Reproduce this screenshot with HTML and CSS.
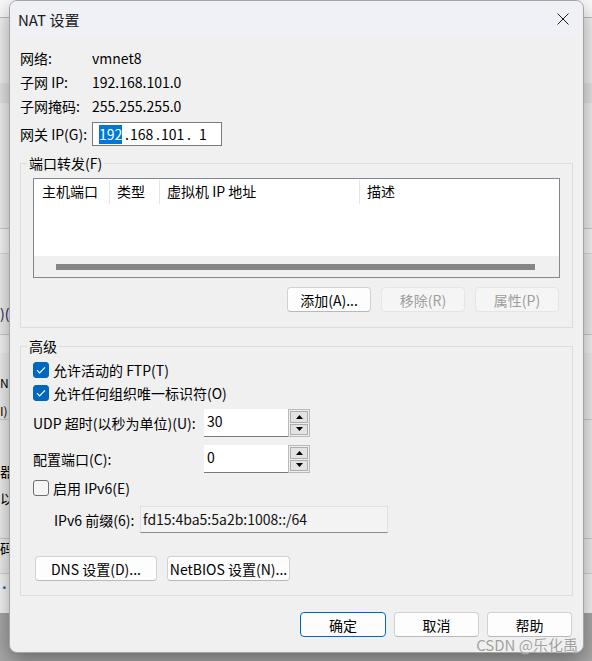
FILE: index.html
```html
<!DOCTYPE html>
<html lang="zh-CN">
<head>
<meta charset="utf-8">
<title>NAT 设置</title>
<link rel="stylesheet" href="styles.css">
</head>
<body>
<div class="desktop">
  <div class="bgwin">
    <div class="bg-r r1"></div>
    <div class="bg-r r2"></div>
    <div class="bg-r r3"></div>
    <div class="bg-r r4"></div>
    <div class="bg-r r5"></div>
    <div class="bg-r r6"><span class="frag f6">)(</span></div>
    <div class="bg-r r7"></div>
    <div class="bg-r r8"><span class="frag f8a">N)</span><span class="frag f8b">I)</span></div>
    <div class="bg-r r9"><span class="frag f9a">器</span><span class="frag f9b">以</span></div>
    <div class="bg-r r10"><span class="frag f10">码</span></div>
    <div class="bg-r r11"><span class="frag f11">.</span></div>
  </div>

  <div class="dialog">
    <div class="titlebar">
      <span class="title">NAT 设置</span>
      <svg class="close" width="12" height="12" viewBox="0 0 12 12"><path d="M0.5 0.5 L11.5 11.5 M11.5 0.5 L0.5 11.5" stroke="#1a1a1a" stroke-width="1" fill="none"/></svg>
    </div>

    <div class="content">
      <div class="info">
        <div class="row"><span class="k">网络:</span><span>vmnet8</span></div>
        <div class="row"><span class="k">子网 IP:</span><span>192.168.101.0</span></div>
        <div class="row"><span class="k">子网掩码:</span><span>255.255.255.0</span></div>
        <div class="row gw"><span class="k">网关 IP(G):</span>
          <div class="ipbox">
            <span class="oct"><span class="sel">192</span></span><span class="dot">.</span><span class="oct">168</span><span class="dot">.</span><span class="oct">101</span><span class="dot">.</span><span class="oct">1</span>
          </div>
        </div>
      </div>

      <fieldset class="group pf">
        <legend>端口转发(F)</legend>
        <div class="list">
          <div class="lhead">
            <span class="col c1">主机端口</span>
            <span class="col c2">类型</span>
            <span class="col c3">虚拟机 IP 地址</span>
            <span class="col c4">描述</span>
          </div>
          <div class="hscroll"><div class="thumb"></div></div>
        </div>
        <div class="btnrow">
          <div class="btn w84">添加(A)...</div>
          <div class="btn w84 disabled">移除(R)</div>
          <div class="btn w84 disabled">属性(P)</div>
        </div>
      </fieldset>

      <fieldset class="group adv">
        <legend>高级</legend>
        <div class="chk-row">
          <span class="cb on"><svg width="16" height="16" viewBox="0 0 16 16"><path d="M4 8.2 L6.6 10.8 L12 5.4" stroke="#fff" stroke-width="1.2" fill="none"/></svg></span>
          <span>允许活动的 FTP(T)</span>
        </div>
        <div class="chk-row">
          <span class="cb on"><svg width="16" height="16" viewBox="0 0 16 16"><path d="M4 8.2 L6.6 10.8 L12 5.4" stroke="#fff" stroke-width="1.2" fill="none"/></svg></span>
          <span>允许任何组织唯一标识符(O)</span>
        </div>
        <div class="spin-row first">
          <span>UDP 超时(以秒为单位)(U):</span>
          <div class="num">30</div>
          <div class="spin">
            <b><svg width="7" height="4" viewBox="0 0 7 4"><polygon points="3.5,0 7,4 0,4" fill="#000"/></svg></b>
            <b><svg width="7" height="4" viewBox="0 0 7 4"><polygon points="0,0 7,0 3.5,4" fill="#000"/></svg></b>
          </div>
        </div>
        <div class="spin-row second">
          <span>配置端口(C):</span>
          <div class="num">0</div>
          <div class="spin">
            <b><svg width="7" height="4" viewBox="0 0 7 4"><polygon points="3.5,0 7,4 0,4" fill="#000"/></svg></b>
            <b><svg width="7" height="4" viewBox="0 0 7 4"><polygon points="0,0 7,0 3.5,4" fill="#000"/></svg></b>
          </div>
        </div>
        <div class="chk-row third">
          <span class="cb"></span>
          <span>启用 IPv6(E)</span>
        </div>
        <div class="prefix-row">
          <span>IPv6 前缀(6):</span>
          <div class="ro">fd15:4ba5:5a2b:1008::/64</div>
        </div>
        <div class="dns-row">
          <div class="btn w122">DNS 设置(D)...</div>
          <div class="btn w123">NetBIOS 设置(N)...</div>
        </div>
      </fieldset>

      <div class="actions">
        <div class="btn w86 primary">确定</div>
        <div class="btn w85">取消</div>
        <div class="btn w85">帮助</div>
      </div>
    </div>
  </div>

  <div class="watermark">CSDN @乐化禹</div>
</div>
</body>
</html>
```

FILE: styles.css
```css
* { box-sizing: border-box; }

body {
  margin: 0;
  font-family: "Noto Sans CJK SC", "Noto Sans", sans-serif;
  font-size: 14px;
  color: #000;
}

.desktop {
  position: relative;
  width: 592px;
  height: 661px;
  overflow: hidden;
  background: #a9a9a9;
}

/* background window peeking out on the left */
.bgwin {
  position: absolute;
  left: 0;
  top: 0;
  width: 592px;
  height: 613px;
  background: #f0f0f0;
  display: flex;
  flex-direction: column;
}
.bg-r { position: relative; flex: none; overflow: hidden; }
.r1 { height: 18px; background: #fbfbfb; border-bottom: 1px solid #bdbdbd; }
.r2 { height: 65px; background: #f2f2f2; }
.r3 { height: 20px; background: #e6e6e6; }
.r4 { height: 126px; background: #f2f2f2; border-bottom: 1px solid #cfcfcf; }
.r5 { height: 25px; background: #f9f9f9; border-bottom: 1px solid #dedede; }
.r6 { height: 81px; background: #f0f0f0; border-bottom: 1px solid #cdcdcd; }
.r7 { height: 18px; background: #f7f7f7; }
.r8 { height: 67px; background: #f0f0f0; border-bottom: 1px solid #cdcdcd; }
.r9 { height: 119px; background: #f0f0f0; border-bottom: 1px solid #cdcdcd; }
.r10 { height: 35px; background: #f0f0f0; border-bottom: 1px solid #d6d6d6; }
.r11 { flex: 1; background: #f7f7f7; }

.frag {
  position: absolute;
  left: 0;
  font-size: 14px;
  line-height: 16px;
  white-space: nowrap;
}
.f6 { top: 51px; color: #1a1a60; }
.f8a { top: 22px; font-size: 12px; }
.f8b { top: 50px; font-size: 12px; }
.f9a { top: 43px; }
.f9b { top: 70px; }
.f10 { top: 1px; }
.f11 { top: 1px; left: 2px; color: #1565c0; font-weight: bold; }

/* dialog */
.dialog {
  position: relative;
  z-index: 1;
  margin-left: 9px;
  width: 575px;
  height: 653px;
  background: #f0f0f0;
  border: 1px solid #a4a4a4;
  border-radius: 8px;
  box-shadow: 0 8px 22px rgba(0, 0, 0, 0.38);
  overflow: hidden;
}

.titlebar {
  height: 36px;
  background: #eff1f6;
  display: flex;
  align-items: center;
  justify-content: space-between;
  padding: 0 14px 0 8px;
}
.title { font-size: 15px; color: #1a1a1a; }
.close { display: block; }

.content { padding: 9px 10px 0 10px; }

.info { display: flex; flex-direction: column; }
.row { display: flex; align-items: center; height: 24px; }
.row .k { width: 72px; flex: none; }
.row.gw { margin-top: 4px; }

.ipbox {
  width: 130px;
  height: 24px;
  border: 1px solid #7a7a7a;
  background: #fff;
  display: flex;
  align-items: center;
  padding-left: 6px;
}
.oct { width: 22px; text-align: center; }
.dot { width: 9px; text-align: right; padding-right: 1px; }
.sel {
  display: inline-block;
  background: #0078d7;
  color: #fff;
  line-height: 19px;
}

/* group boxes */
.group {
  margin: 8px 0 0;
  border: 1px solid #dcdcdc;
  min-width: 0;
}
.group legend {
  padding: 0 2px;
  margin-left: -6px;
  line-height: 18px;
}
.pf { padding: 6px 12px 15px; }
.adv { margin-top: 9px; padding: 3px 12px 14px; }

.list {
  height: 100px;
  border: 1px solid #828790;
  background: #fff;
  display: flex;
  flex-direction: column;
  justify-content: space-between;
}
.lhead { display: flex; height: 25px; padding-top: 1px; }
.col {
  height: 24px;
  line-height: 22px;
  padding-left: 7px;
  border-right: 1px solid #e5e5e5;
  flex: none;
  white-space: nowrap;
}
.c1 { width: 76px; padding-left: 8px; }
.c2 { width: 50px; }
.c3 { width: 200px; }
.c4 { border-right: 0; flex: 1; }

.hscroll {
  height: 21px;
  background: #f0f0f0;
  display: flex;
  align-items: center;
  padding: 0 24px 0 22px;
}
.thumb { flex: 1; height: 6px; background: #858585; }

.btnrow {
  display: flex;
  justify-content: flex-end;
  gap: 10px;
  margin-top: 9px;
  padding-right: 1px;
}

.btn {
  height: 25px;
  line-height: 18px;
  border: 1px solid #d0d0d0;
  border-bottom-color: #b8b8b8;
  border-radius: 4px;
  background: #fdfdfd;
  display: flex;
  align-items: center;
  justify-content: center;
  white-space: nowrap;
  flex: none;
}
.btn.disabled {
  background: #f5f5f5;
  border-color: #e5e5e5;
  color: #9d9d9d;
}
.btn.primary { border: 1px solid #0067c0; }
.w84 { width: 84px; }
.w85 { width: 85px; }
.w86 { width: 86px; }
.w122 { width: 122px; }
.w123 { width: 123px; }

/* advanced */
.chk-row { display: flex; align-items: center; gap: 4px; height: 23px; }
.chk-row.third { margin-top: 3px; }
.cb {
  width: 16px;
  height: 16px;
  border-radius: 3px;
  border: 1px solid #6e6e6e;
  background: #f5f5f5;
  flex: none;
  display: flex;
}
.cb.on { background: #0067c0; border-color: #0067c0; }
.cb svg { margin: -1px; }

.spin-row {
  display: grid;
  grid-template-columns: 171px 84px 22px;
  align-items: center;
  height: 28px;
}
.spin-row.first { margin-top: 5px; }
.spin-row.second { margin-top: 8px; }

.num {
  height: 28px;
  background: #fff;
  border-bottom: 1px solid #7a7a7a;
  padding: 2px 3px 0;
  line-height: 20px;
}
.spin {
  height: 28px;
  border: 1px solid #b9b9b9;
  padding: 1px;
  display: flex;
  flex-direction: column;
  gap: 1px;
}
.spin b {
  flex: 1;
  background: #e3e3e3;
  border: 1px solid #adadad;
  display: flex;
  align-items: center;
  justify-content: center;
}
.spin svg { display: block; }

.prefix-row {
  display: grid;
  grid-template-columns: 86px 248px;
  align-items: center;
  margin-top: 7px;
  padding-left: 21px;
}
.ro {
  height: 27px;
  border: 1px solid #e0e0e0;
  border-bottom-color: #8a8a8a;
  background: #f3f3f3;
  padding-left: 2px;
  line-height: 24px;
  color: #111;
}

.dns-row {
  display: flex;
  gap: 10px;
  margin-top: 23px;
  padding-left: 2px;
}

.actions {
  display: flex;
  justify-content: flex-end;
  gap: 8px;
  margin-top: 16px;
  padding-right: 1px;
}

/* CSDN watermark laid over the screenshot */
.watermark {
  position: absolute;
  z-index: 2;
  right: 14px;
  bottom: 8px;
  font-size: 15px;
  line-height: 16px;
  color: #a0a0a0;
  text-shadow: 0 0 1px #fff;
  white-space: nowrap;
}
```
